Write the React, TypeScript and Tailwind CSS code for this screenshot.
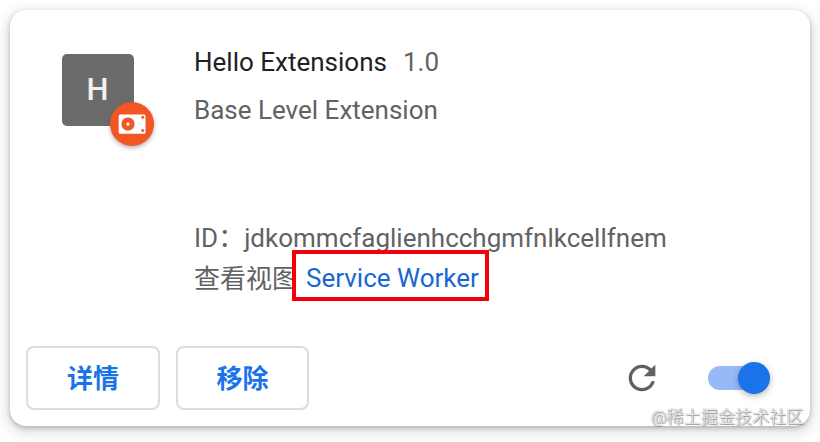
import React from 'react';

// Unpacked extension badge shown over the app icon
const UnpackedBadge: React.FC = () => (
  <div className="absolute left-12 top-12 flex h-11 w-11 items-center justify-center rounded-full bg-[#f25622] shadow-[0_2px_4px_rgba(60,64,67,0.4)]">
    <svg className="h-11 w-11" viewBox="0 0 44 44">
      <rect x="8.7" y="12.5" width="26.8" height="19.2" rx="1.5" fill="#fff" />
      <circle cx="18" cy="22" r="6.6" fill="#f25622" />
      <circle cx="18" cy="22" r="1.7" fill="#fff" />
      <circle cx="32.7" cy="15.3" r="1.5" fill="#f25622" />
      <circle cx="32.7" cy="28.6" r="1.5" fill="#f25622" />
    </svg>
  </div>
);

const ExtensionIcon: React.FC = () => (
  <div className="relative flex h-[72px] w-[72px] shrink-0 items-center justify-center rounded-[5px] bg-[#6b6b6b]">
    <span className="-ml-px -mt-px text-[31px] font-medium leading-none text-[#f0f0f0]">H</span>
    <UnpackedBadge />
  </div>
);

interface CardButtonProps {
  label: string;
  className: string;
}

const CardButton: React.FC<CardButtonProps> = ({ label, className }) => (
  <button
    className={`flex h-16 items-center justify-center rounded-lg border-2 border-[#dadce0] pt-0.5 text-[26px] font-bold text-[#1a73e8] ${className}`}
  >
    {label}
  </button>
);

const ReloadIcon: React.FC = () => (
  <svg className="h-10 w-10" viewBox="0 0 24 24" fill="#5f6163">
    <path d="M17.65 6.35A7.958 7.958 0 0 0 12 4c-4.42 0-7.99 3.58-7.99 8s3.57 8 7.99 8c3.73 0 6.84-2.55 7.73-6h-2.08A5.99 5.99 0 0 1 12 18c-3.31 0-6-2.69-6-6s2.69-6 6-6c1.66 0 3.14.69 4.22 1.78L13 11h7V4l-2.35 2.35z" />
  </svg>
);

const Toggle: React.FC = () => (
  <div className="flex h-8 w-[62px] items-center">
    <div className="h-6 w-14 rounded-full bg-[#98b9f8]" />
    <div className="-ml-[26px] h-8 w-8 shrink-0 rounded-full bg-[#1a73e8] shadow-[0_2px_6px_rgba(0,0,0,0.3)]" />
  </div>
);

export default function App() {
  return (
    <div className="relative h-[442px] w-[820px] overflow-hidden bg-white p-[10px] font-['Roboto','Noto_Sans_CJK_SC',sans-serif] text-[26px] text-[#616264]">
      <div className="flex h-[416px] w-[800px] flex-col rounded-2xl bg-white shadow-[0_2px_4px_0_rgba(60,64,67,0.3),0_4px_12px_4px_rgba(60,64,67,0.15)]">
        <div className="flex h-80 pl-[52px] pt-11">
          <ExtensionIcon />
          <div className="ml-[60px] flex flex-col whitespace-nowrap">
            <div className="-mt-3 flex h-10 items-center gap-4">
              <span className="text-[#202124]">Hello Extensions</span>
              <span>1.0</span>
            </div>
            <div className="mt-2 h-10 leading-10">Base Level Extension</div>
            <div className="mt-[88px] h-10 leading-10">ID：jdkommcfaglienhcchgmfnlkcellfnem</div>
            <div className="flex h-10 items-center">
              <span className="pt-0.5">查看视图</span>
              <div className="-ml-1.5 mt-[-5px] flex h-[51px] w-[197px] shrink-0 items-center border-4 border-[#f4000b] bg-white pl-[10px] pt-1.5 text-[#1967d2]">
                Service Worker
              </div>
            </div>
          </div>
        </div>
        <div className="flex h-24 items-center pl-4 pr-10">
          <CardButton label="详情" className="w-[134px]" />
          <CardButton label="移除" className="ml-4 w-[133px]" />
          <div className="ml-auto flex items-center gap-[46px]">
            <ReloadIcon />
            <Toggle />
          </div>
        </div>
      </div>
      <span className="absolute left-[651px] top-[405px] whitespace-nowrap text-[17.1px] font-light leading-6 text-[#f4f4f4] [text-shadow:0_0_1px_#666,1px_1px_1px_#888]">
        @稀土掘金技术社区
      </span>
    </div>
  );
}
